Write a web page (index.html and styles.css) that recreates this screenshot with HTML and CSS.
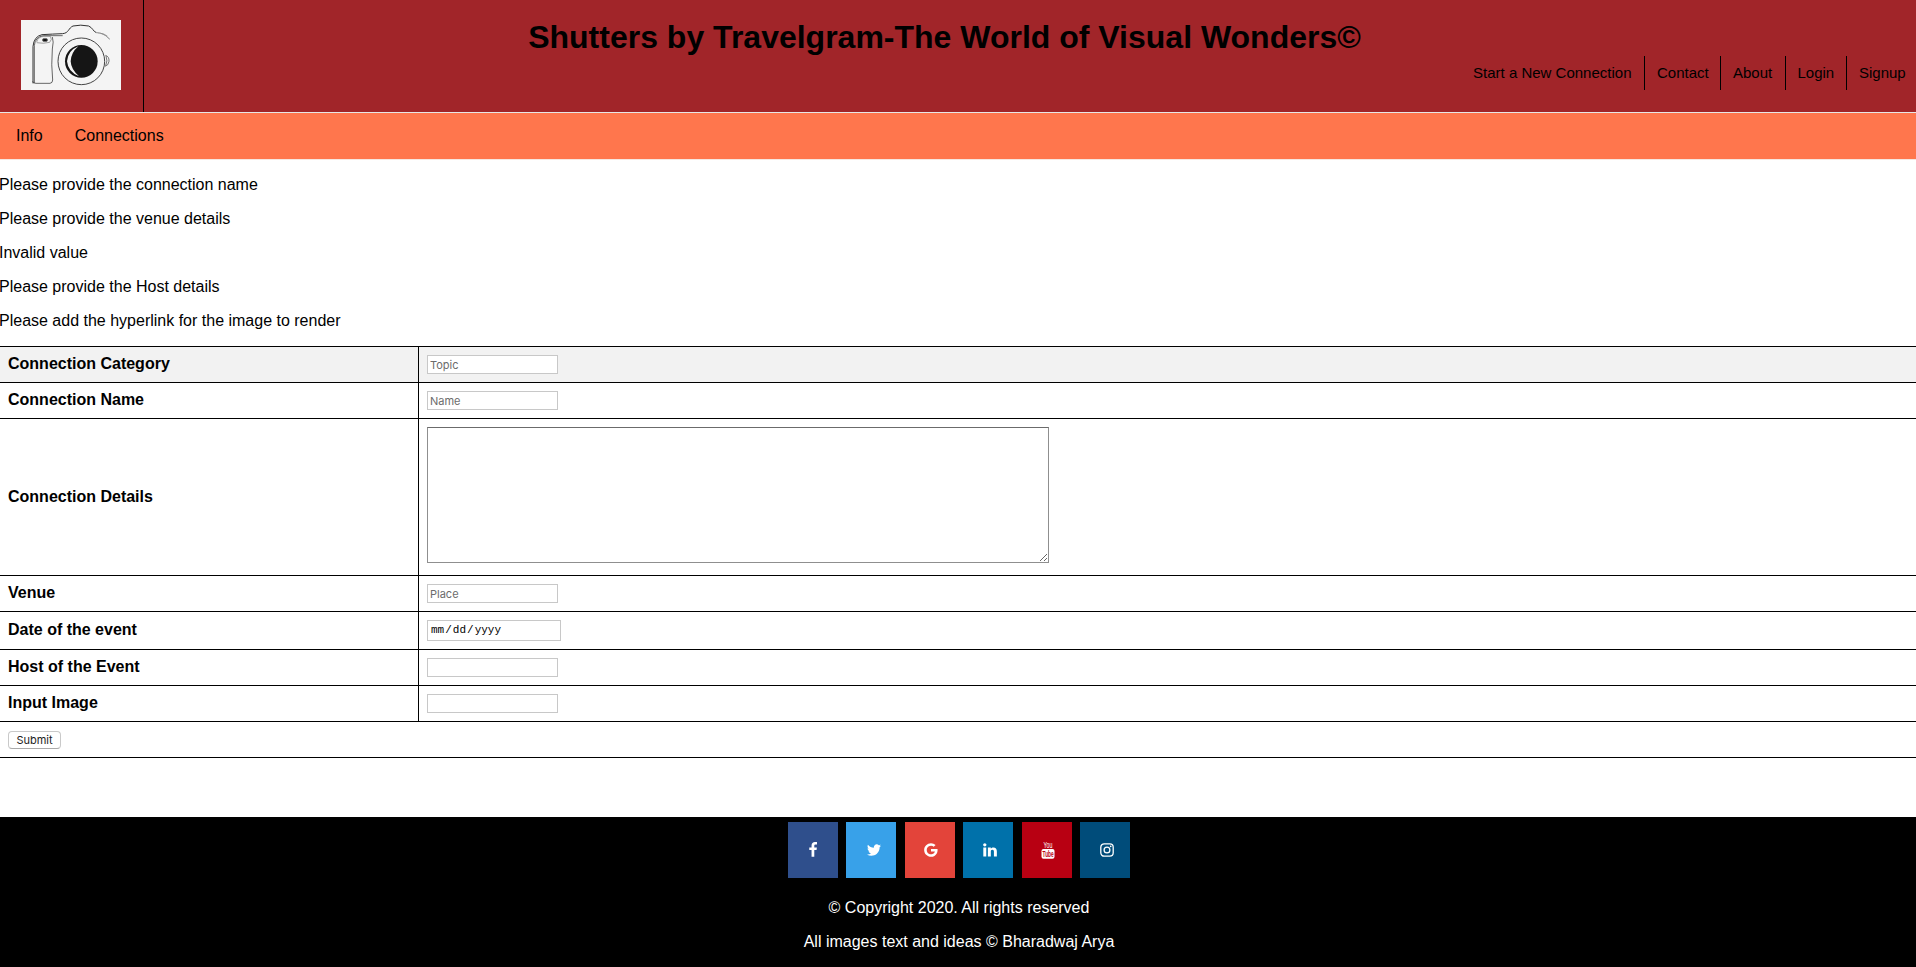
FILE: index.html
```html
<!DOCTYPE html>
<html lang="en">
<head>
<meta charset="utf-8">
<title>Shutters by Travelgram</title>
<link rel="stylesheet" href="styles.css">
</head>
<body>
<header class="header">
  <a class="logo" href="#" aria-label="Home">
    <svg class="logo-image" viewBox="63 60 300 210" fill="none" stroke="#333" stroke-width="3">
      <rect x="63" y="60" width="300" height="210" fill="#f4f4f4" stroke="none"/>
      <path d="M99 250V139Q102 109 126 104Q158 102 188 101C207 99 205 84 219 78Q242 73 266 78C279 84 279 94 289 98"/>
      <path d="M98 244Q98 250 108 250H150Q158 249 158 240Q153 195 157 147Q162 124 157 111M103 249V137Q105 111 130 107H188" stroke-width="2.2"/>
      <path d="M287 97Q310 97 328 117M292 99Q313 99 322 108M302 100Q316 103 330 118" stroke="#888" stroke-width="2"/>
      <path d="M110 126Q114 110 132 109H151Q158 118 149 127Q130 132 110 128" stroke="#777" stroke-width="2"/>
      <ellipse cx="135" cy="120" rx="8" ry="5" fill="#111" stroke="#777"/>
      <circle cx="244" cy="184" r="70" stroke="#444"/>
      <circle cx="244" cy="184" r="49" fill="#151515" stroke="none"/>
      <path d="M235 139Q204 151 201 184Q204 216 237 229Q213 208 212 184Q213 158 235 139Z" fill="#f4f4f4" stroke="none"/>
      <path d="M316 166Q328 169 327 184Q326 196 315 199M318 168Q324 182 317 197" stroke="#555" stroke-width="2.4"/>
    </svg>
  </a>
  <div class="header-main">
    <h1 class="title">Shutters by Travelgram-The World of Visual Wonders©</h1>
    <nav class="top-nav">
      <a class="top-link link-start" href="#">Start a New Connection</a>
      <a class="top-link link-contact" href="#">Contact</a>
      <a class="top-link link-about" href="#">About</a>
      <a class="top-link link-login" href="#">Login</a>
      <a class="top-link link-signup" href="#">Signup</a>
    </nav>
  </div>
</header>
<nav class="sub-nav">
  <a href="#">Info</a>
  <a href="#">Connections</a>
</nav>
<main>
  <div class="errors">
    <p>Please provide the connection name</p>
    <p>Please provide the venue details</p>
    <p>Invalid value</p>
    <p>Please provide the Host details</p>
    <p>Please add the hyperlink for the image to render</p>
  </div>
  <form class="form">
    <div class="row shaded"><label class="label" for="topic">Connection Category</label><div class="cell"><input class="field" id="topic" placeholder="Topic"></div></div>
    <div class="row"><label class="label" for="name">Connection Name</label><div class="cell"><input class="field" id="name" placeholder="Name"></div></div>
    <div class="row row-details"><label class="label" for="details">Connection Details</label><div class="cell"><textarea class="details" id="details"></textarea></div></div>
    <div class="row"><label class="label" for="venue">Venue</label><div class="cell"><input class="field" id="venue" placeholder="Place"></div></div>
    <div class="row row-date"><span class="label">Date of the event</span><div class="cell"><div class="field date"><span>mm</span><span class="slash">/</span><span>dd</span><span class="slash">/</span><span>yyyy</span></div></div></div>
    <div class="row"><label class="label" for="host">Host of the Event</label><div class="cell"><input class="field" id="host"></div></div>
    <div class="row"><label class="label" for="image">Input Image</label><div class="cell"><input class="field" id="image"></div></div>
    <div class="row row-submit"><button class="submit" type="button">Submit</button></div>
  </form>
</main>
<footer class="footer">
  <div class="social">
    <a class="tile facebook" href="#" aria-label="Facebook"><svg class="icon" viewBox="0 0 1792 1792"><path d="M1343 12v264h-157q-86 0-116 36t-30 108v189h293l-39 296h-254v759h-306v-759h-255v-296h255v-218q0-186 104-288.500t277-102.500q147 0 228 12z"/></svg></a>
    <a class="tile twitter" href="#" aria-label="Twitter"><svg class="icon" viewBox="0 0 1792 1792"><path d="M1684 408q-67 98-162 167 1 14 1 42 0 130-38 259.500t-115.500 248.500-184.500 210.500-258 146-323 54.500q-271 0-496-145 35 4 78 4 225 0 401-138-105-2-188-64.500t-114-159.500q33 5 61 5 43 0 85-11-112-23-185.500-111.500t-73.500-205.500v-4q68 38 146 41-66-44-105-115t-39-154q0-88 44-163 121 149 294.500 238.500t371.500 99.500q-8-38-8-74 0-134 94.500-228.500t228.500-94.500q140 0 236 102 109-21 205-78-37 115-142 178 93-10 186-50z"/></svg></a>
    <a class="tile google" href="#" aria-label="Google"><svg class="icon" viewBox="0 0 1792 1792"><path d="M896 786h725q12 67 12 128 0 217-91 387.500t-259.500 266.500-386.500 96q-157 0-299-60.500t-245-163.500-163.500-245-60.500-299 60.500-299 163.500-245 245-163.500 299-60.500q300 0 515 201l-209 201q-123-119-306-119-129 0-238.500 65t-173.500 176.500-64 243.500 64 243.500 173.500 176.500 238.500 65q87 0 160-24t120-60 82-82 51.500-87 22.500-78h-436v-264z"/></svg></a>
    <a class="tile linkedin" href="#" aria-label="LinkedIn"><svg class="icon" viewBox="0 0 1792 1792"><path d="M477 625v991h-330v-991h330zm21-306q1 73-50.500 122t-135.500 49h-2q-82 0-132-49t-50-122q0-74 51.500-122.500t134.500-48.500 133 48.500 51 122.500zm1166 729v568h-329v-530q0-105-40.500-164.500t-126.500-59.500q-63 0-105.500 34.500t-63.500 85.500q-11 30-11 81v553h-329q2-399 2-647t-1-296l-1-48h329v144h-2q20-32 41-56t56.500-52 87-43.500 114.500-15.500q171 0 275 113.500t104 332.500z"/></svg></a>
    <a class="tile youtube" href="#" aria-label="YouTube"><svg class="icon" viewBox="0 0 16 16"><text class="yt-you" x="3.5" y="6.2" textLength="8.8" lengthAdjust="spacingAndGlyphs">You</text><rect x="1.5" y="7" width="13" height="9.7" rx="2"/><text class="yt-tube" x="2.6" y="15.2" textLength="11" lengthAdjust="spacingAndGlyphs">Tube</text></svg></a>
    <a class="tile instagram" href="#" aria-label="Instagram"><svg class="icon" viewBox="0 0 16 16"><g fill="none" stroke="#fff" stroke-width="1.3"><rect x="1.8" y="1.8" width="12.4" height="12.4" rx="3.4"/><circle cx="8" cy="8" r="2.9"/></g><circle cx="11.7" cy="4.3" r=".85"/></svg></a>
  </div>
  <p>© Copyright 2020. All rights reserved</p>
  <p>All images text and ideas © Bharadwaj Arya</p>
</footer>
</body>
</html>
```

FILE: styles.css
```css
* { box-sizing: border-box; }
body {
  margin: 0;
  min-height: 967px;
  display: flex;
  flex-direction: column;
  overflow: hidden;
  background: #fff;
  color: #000;
  font: 16px/18px "Liberation Sans", Arial, sans-serif;
}
a { color: inherit; text-decoration: none; }

/* Header */
.header { display: flex; height: 112px; background: #a12529; }
.logo { width: 144px; padding: 20px 0 0 21px; border-right: 1px solid #000; }
.logo-image { display: block; width: 100px; height: 70px; }
.header-main { flex: 1; }
.title {
  width: 1601px;
  margin: 0;
  padding-top: 19px;
  font-size: 32px;
  line-height: 36px;
  text-align: center;
}
.top-nav { display: flex; justify-content: flex-end; margin-top: 1px; padding-right: 10px; font-size: 15px; line-height: 34px; }
.top-link { padding-left: 12px; border-right: 1px solid #000; white-space: nowrap; }
.link-start { padding-right: 12.5px; }
.link-contact { width: 76px; }
.link-about { width: 65px; }
.link-login { width: 61px; padding-left: 11.5px; }
.link-signup { width: 59px; border-right: 0; }
.sub-nav {
  display: flex;
  gap: 32px;
  height: 48px;
  padding: 14px 16px;
  border-top: 1px solid #e7e7e7;
  border-bottom: 1px solid #f6e6e0;
  background: #ff764d;
}

/* Validation messages */
.errors { margin-left: -1px; }
p { margin: 16px 0; }

/* Form */
.form { border-top: 1px solid #000; }
.row { display: flex; height: 36px; border-bottom: 1px solid #000; }
.shaded { background: #f2f2f2; }
.row-details { height: 157px; }
.row-date { height: 38px; }
.label {
  display: flex;
  align-items: center;
  width: 419px;
  padding: 0 8px 1px;
  border-right: 1px solid #000;
  font-weight: bold;
}
.cell { padding: 8px; }
.field {
  display: block;
  width: 131px;
  height: 19px;
  padding: 1px 2px;
  border: 1px solid #c8c8c8;
  border-radius: 0;
  background: #fff;
  font: 11px Inter, sans-serif;
}
.field::placeholder { color: #6c6c6c; }
.details {
  display: block;
  width: 622px;
  height: 136px;
  margin: 0;
  border: 1px solid #8f8f8f;
  border-top-color: #6b6b6b;
  border-radius: 0;
}
.date {
  display: flex;
  width: 134px;
  height: 21px;
  padding: 0 3px;
  font: 11px/19px "Liberation Mono", "Courier New", monospace;
}
.slash { padding: 0 1px; }
.row-submit { padding: 9px 8px; }
.submit {
  width: 53px;
  height: 18px;
  padding: 0;
  border: 1px solid #c9c9c9;
  border-bottom-color: #aaa;
  border-radius: 4px;
  background: #fff;
  color: #222;
  font: 11px/15px Inter, sans-serif;
}

/* Footer */
.footer {
  height: 150px;
  margin-top: auto;
  padding: 5px 0 0 2px;
  background: #000;
  color: #fff;
  text-align: center;
}
.footer p { margin: 21px 0 0; }
.footer p + p { margin-top: 16px; }
.social { display: flex; justify-content: center; gap: 8.4px; }
.tile { width: 50px; height: 56px; padding: 20px 0 0 18.7px; }
.icon { display: block; width: 16px; height: 16px; fill: #fff; overflow: visible; }
.facebook { padding-left: 16.7px; background: #2f4f8c; }
.twitter { padding-left: 19.4px; background: #38a1e9; }
.google { background: #e3443a; }
.linkedin { background: #0071aa; }
.youtube { background: #b80012; }
.instagram { background: #004c7a; }
.yt-you, .yt-tube { font: 8.6px "Liberation Sans", Arial, sans-serif; }
.yt-tube { fill: #b80012; font-weight: bold; }
```
